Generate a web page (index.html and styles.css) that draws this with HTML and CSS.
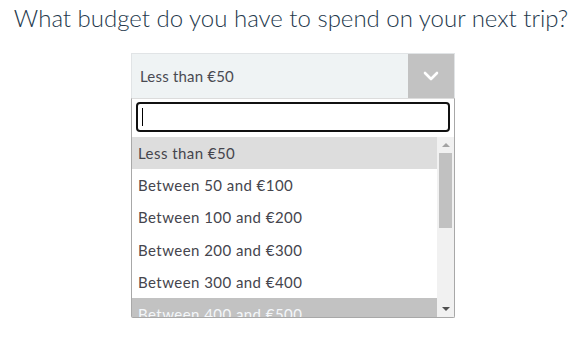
FILE: index.html
```html
<!DOCTYPE html>
<html lang="en">
<head>
<meta charset="utf-8">
<title>Budget</title>
<link rel="stylesheet" href="styles.css">
</head>
<body>
<h1 class="question">What budget do you have to spend on your next trip?</h1>
<div class="select">
  <div class="select-head">
    <span class="select-value">Less than €50</span>
    <span class="select-arrow">
      <svg width="16" height="10" viewBox="0 0 16 10"><path d="M2 2 L8 8 L14 2" fill="none" stroke="#fff" stroke-width="2.6" stroke-linecap="round" stroke-linejoin="round"/></svg>
    </span>
  </div>
  <div class="dropdown">
    <div class="search"><span class="caret"></span></div>
    <div class="list">
      <ul class="options">
        <li class="option hover">Less than €50</li>
        <li class="option">Between 50 and €100</li>
        <li class="option">Between 100 and €200</li>
        <li class="option">Between 200 and €300</li>
        <li class="option">Between 300 and €400</li>
        <li class="option selected">Between 400 and €500</li>
      </ul>
      <div class="scrollbar">
        <span class="arrow up"></span>
        <span class="thumb"></span>
        <span class="track-fill"></span>
        <span class="arrow down"></span>
      </div>
    </div>
  </div>
</div>
</body>
</html>
```
FILE: styles.css
```css
html, body {
  margin: 0;
  padding: 0;
  background: #fff;
}
body {
  font-family: "Lato", "Open Sans", sans-serif;
}
.question {
  margin: 0;
  padding-top: 4px;
  text-align: center;
  font-size: 24px;
  line-height: 28px;
  font-weight: 300;
  color: #24384c;
}
.select {
  width: 324px;
  margin: 21px 0 0 131px;
}
.select-head {
  height: 44px;
  display: flex;
  align-items: stretch;
  background: #eff3f4;
  border: 1px solid #e1e4e6;
  border-bottom: none;
}
.select-value {
  flex: 1;
  display: flex;
  align-items: center;
  padding-left: 8px;
  font-size: 15px;
  letter-spacing: 0.2px;
  color: #4a4a52;
}
.select-arrow {
  width: 46px;
  background: #c2c2c2;
  display: flex;
  align-items: center;
  justify-content: center;
}
.dropdown {
  border: 1px solid #a8a8a8;
  border-top: 1px solid #dcdcdc;
  border-radius: 0 0 2px 2px;
  background: #fff;
}
.search {
  margin: 3px 4px 5px 4px;
  height: 26px;
  border: 2px solid #111;
  border-radius: 4px;
  display: flex;
  align-items: center;
  padding-left: 4px;
}
.caret {
  width: 1px;
  height: 18px;
  background: #000;
}
.list {
  display: flex;
  height: 180px;
  overflow: hidden;
}
.options {
  flex: 1;
  margin: 0;
  padding: 0;
  list-style: none;
}
.option {
  height: 32.2px;
  display: flex;
  align-items: center;
  padding-left: 6px;
  font-size: 15px;
  letter-spacing: 0.45px;
  color: #45454d;
  white-space: nowrap;
}
.option.hover {
  background: #dddddd;
}
.option.selected {
  background: #c2c2c2;
  color: #f4f7fa;
}
.scrollbar {
  width: 17px;
  background: #f1f1f1;
  display: flex;
  flex-direction: column;
  align-items: center;
}
.arrow {
  width: 0;
  height: 0;
  border-left: 4px solid transparent;
  border-right: 4px solid transparent;
}
.arrow.up {
  margin-top: 6px;
  border-bottom: 4px solid #a3a3a3;
}
.arrow.down {
  margin-bottom: 6px;
  border-top: 4px solid #505050;
}
.thumb {
  margin-top: 6px;
  width: 13px;
  height: 75px;
  background: #c1c1c1;
}
.track-fill {
  flex: 1;
}
```
